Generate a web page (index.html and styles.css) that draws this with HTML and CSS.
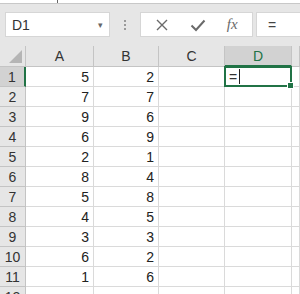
FILE: index.html
```html
<!DOCTYPE html>
<html lang="en">
<head>
    <meta charset="UTF-8">
    <title>Sheet1 - Excel</title>
    <link rel="stylesheet" href="styles.css">
</head>
<body>
    <div class="topline"><span class="tick"></span></div>

    <div class="formula-bar">
        <div class="name-box">
            <span>D1</span>
            <span class="caret">&#9662;</span>
        </div>
        <div class="grip"><i></i><i></i><i></i></div>
        <div class="fx-buttons">
            <svg class="fx-icon" width="14" height="14" viewBox="0 0 14 14">
                <path d="M2 2 L12 12 M12 2 L2 12" stroke="#6a6a6a" stroke-width="1.4" fill="none"/>
            </svg>
            <svg class="fx-icon" width="16" height="14" viewBox="0 0 16 14">
                <path d="M1.5 7.5 L6 12 L14.5 2.5" stroke="#6a6a6a" stroke-width="2" fill="none"/>
            </svg>
            <span class="fx">fx</span>
        </div>
        <div class="formula-input">=</div>
    </div>

    <div class="sheet">
        <div class="corner"><span class="tri"></span></div>
        <div class="col-head">A</div>
        <div class="col-head">B</div>
        <div class="col-head">C</div>
        <div class="col-head active">D</div>
        <div class="col-head"></div>

        <div class="row-head active">1</div>
        <div class="cell">5</div><div class="cell">2</div><div class="cell"></div>
        <div class="cell selected"><span class="edit">=</span><span class="cursor"></span><span class="handle"></span></div>
        <div class="cell"></div>

        <div class="row-head">2</div>
        <div class="cell">7</div><div class="cell">7</div><div class="cell"></div><div class="cell"></div><div class="cell"></div>
        <div class="row-head">3</div>
        <div class="cell">9</div><div class="cell">6</div><div class="cell"></div><div class="cell"></div><div class="cell"></div>
        <div class="row-head">4</div>
        <div class="cell">6</div><div class="cell">9</div><div class="cell"></div><div class="cell"></div><div class="cell"></div>
        <div class="row-head">5</div>
        <div class="cell">2</div><div class="cell">1</div><div class="cell"></div><div class="cell"></div><div class="cell"></div>
        <div class="row-head">6</div>
        <div class="cell">8</div><div class="cell">4</div><div class="cell"></div><div class="cell"></div><div class="cell"></div>
        <div class="row-head">7</div>
        <div class="cell">5</div><div class="cell">8</div><div class="cell"></div><div class="cell"></div><div class="cell"></div>
        <div class="row-head">8</div>
        <div class="cell">4</div><div class="cell">5</div><div class="cell"></div><div class="cell"></div><div class="cell"></div>
        <div class="row-head">9</div>
        <div class="cell">3</div><div class="cell">3</div><div class="cell"></div><div class="cell"></div><div class="cell"></div>
        <div class="row-head">10</div>
        <div class="cell">6</div><div class="cell">2</div><div class="cell"></div><div class="cell"></div><div class="cell"></div>
        <div class="row-head">11</div>
        <div class="cell">1</div><div class="cell">6</div><div class="cell"></div><div class="cell"></div><div class="cell"></div>
        <div class="row-head">12</div>
        <div class="cell"></div><div class="cell"></div><div class="cell"></div><div class="cell"></div><div class="cell"></div>
    </div>
</body>
</html>
```

FILE: styles.css
```css
body {
    margin: 0;
    width: 300px;
    height: 294px;
    overflow: hidden;
    background: #fff;
    font-family: "Liberation Sans", Arial, sans-serif;
    font-size: 14px;
    color: #222;
}
.topline {
    height: 3px;
    border-bottom: 1px solid #c8c8c8;
    position: relative;
}
.tick {
    position: absolute;
    left: 57px;
    top: 0;
    width: 1px;
    height: 3px;
    background: #666;
}
.formula-bar {
    display: flex;
    align-items: center;
    height: 42px;
    background: #e6e6e6;
    padding-left: 5px;
    box-sizing: border-box;
    border-bottom: 1px solid #e6e6e6;
}
.name-box {
    width: 105px;
    height: 25px;
    box-sizing: border-box;
    background: #fff;
    border: 1px solid #d6d6d6;
    display: flex;
    align-items: center;
    justify-content: space-between;
    padding: 0 6px 0 6px;
    color: #333;
}
.caret {
    font-size: 9px;
    color: #666;
}
.grip {
    width: 30px;
    display: flex;
    flex-direction: column;
    align-items: center;
    gap: 2px;
}
.grip i {
    width: 2px;
    height: 2px;
    background: #9a9a9a;
}
.fx-buttons {
    width: 113px;
    height: 25px;
    box-sizing: border-box;
    background: #fff;
    border: 1px solid #d6d6d6;
    display: flex;
    align-items: center;
    justify-content: space-around;
    padding: 0 4px;
}
.fx {
    font-family: "Liberation Serif", "Times New Roman", serif;
    font-style: italic;
    font-size: 15px;
    color: #6a6a6a;
}
.formula-input {
    margin-left: 3px;
    flex: 1;
    height: 25px;
    box-sizing: border-box;
    background: #fff;
    border: 1px solid #d6d6d6;
    border-right: none;
    display: flex;
    align-items: center;
    padding-left: 11px;
    color: #444;
}
.sheet {
    display: grid;
    grid-template-columns: 26px 68px 65px 66px 67px 1fr;
    grid-template-rows: 21px;
    grid-auto-rows: 20px;
}
.corner, .col-head, .row-head {
    background: #e6e6e6;
    box-sizing: border-box;
    border-right: 1px solid #c4c4c4;
    border-bottom: 1px solid #c4c4c4;
    color: #333;
    display: flex;
    align-items: center;
    justify-content: center;
}
.corner {
    position: relative;
}
.tri {
    position: absolute;
    right: 3px;
    bottom: 3px;
    width: 0;
    height: 0;
    border-left: 13px solid transparent;
    border-bottom: 13px solid #b5b5b5;
}
.col-head.active {
    background: #d2d2d2;
    color: #217346;
    border-bottom: 2px solid #217346;
}
.row-head.active {
    background: #d2d2d2;
    border-right: 2px solid #217346;
}
.cell {
    box-sizing: border-box;
    border-right: 1px solid #dadada;
    border-bottom: 1px solid #dadada;
    display: flex;
    align-items: center;
    justify-content: flex-end;
    padding-right: 4px;
}
.cell.selected {
    position: relative;
    justify-content: flex-start;
    padding-left: 4px;
}
.cell.selected::after {
    content: "";
    position: absolute;
    left: -1px;
    top: -1px;
    right: -1px;
    bottom: -1px;
    border: 2px solid #217346;
}
.edit {
    color: #333;
}
.cursor {
    width: 1px;
    height: 15px;
    background: #222;
    margin-left: 2px;
}
.handle {
    position: absolute;
    right: -3px;
    bottom: -3px;
    width: 5px;
    height: 5px;
    background: #217346;
    border: 1px solid #fff;
    z-index: 1;
}
```
